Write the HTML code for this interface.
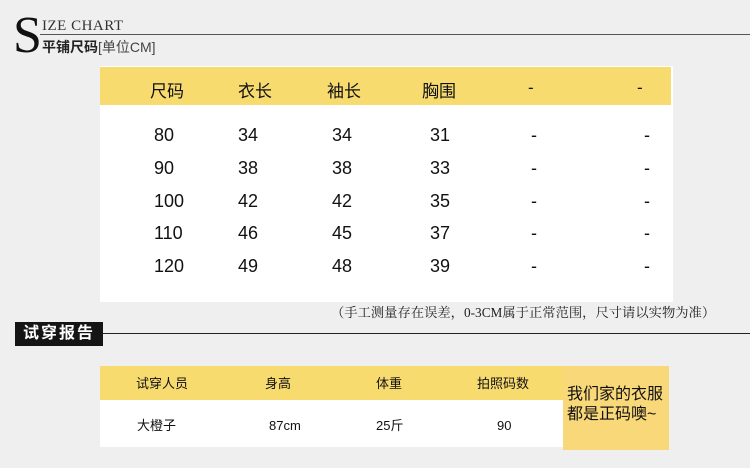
<!DOCTYPE html>
<html><head><meta charset="utf-8"><style>
*{margin:0;padding:0;box-sizing:border-box}
body{width:750px;height:468px;background:#efefef;position:relative;overflow:hidden;font-family:"Liberation Sans","Noto Sans CJK SC",sans-serif;color:#111}
.a{position:absolute;white-space:nowrap}
.h{font-size:17px}
.n{font-size:18px}
.s{font-size:13px;line-height:16px}
.n span{display:block;margin-top:8.75px}
</style></head><body>
<div class="a" style="left:13px;top:13px;font-family:'Liberation Serif',serif;font-size:52px;line-height:46px;color:#111">S</div>
<div class="a" style="left:42px;top:18px;font-family:'Liberation Serif',serif;font-size:15px;color:#333;letter-spacing:0.5px">IZE CHART</div>
<div class="a" style="left:40px;top:34px;width:710px;height:1px;background:#555"></div>
<div class="a" style="left:42px;top:37px;font-size:14px;color:#222"><b>平铺尺码</b><span style="color:#444">[单位CM]</span></div>

<div class="a" style="left:100px;top:66px;width:573px;height:236px;background:#fff"></div>
<div class="a" style="left:100px;top:67px;width:571px;height:38px;background:#f8db6f"></div>
<div class="a h" style="left:150px;top:77px">尺码</div>
<div class="a h" style="left:238px;top:77px">衣长</div>
<div class="a h" style="left:327px;top:77px">袖长</div>
<div class="a h" style="left:422px;top:77px">胸围</div>
<div class="a h" style="left:528px;top:78px">-</div>
<div class="a h" style="left:637px;top:78px">-</div>

<div class="a n" style="left:154px;top:123px;line-height:24px">80<span>90</span><span>100</span><span>110</span><span>120</span></div>
<div class="a n" style="left:238px;top:123px;line-height:24px">34<span>38</span><span>42</span><span>46</span><span>49</span></div>
<div class="a n" style="left:332px;top:123px;line-height:24px">34<span>38</span><span>42</span><span>45</span><span>48</span></div>
<div class="a n" style="left:430px;top:123px;line-height:24px">31<span>33</span><span>35</span><span>37</span><span>39</span></div>
<div class="a n" style="left:531px;top:123px;line-height:24px">-<span>-</span><span>-</span><span>-</span><span>-</span></div>
<div class="a n" style="left:644px;top:123px;line-height:24px">-<span>-</span><span>-</span><span>-</span><span>-</span></div>

<div class="a" style="left:331px;top:302px;font-family:'Liberation Serif','Noto Serif CJK SC',serif;font-size:13.3px;color:#222">（手工测量存在误差，0-3CM属于正常范围，尺寸请以实物为准）</div>

<div class="a" style="left:15px;top:322px;width:88px;height:24px;background:#151515;color:#fff;font-size:16px;font-weight:bold;line-height:24px;text-align:center;letter-spacing:2px">试穿报告</div>
<div class="a" style="left:103px;top:333px;width:647px;height:1px;background:#222"></div>

<div class="a" style="left:100px;top:366px;width:463px;height:81px;background:#fff"></div>
<div class="a" style="left:100px;top:366px;width:463px;height:34px;background:#f8db6f"></div>
<div class="a" style="left:563px;top:366px;width:106px;height:84px;background:#f8d878"></div>
<div class="a s" style="left:136px;top:376px">试穿人员</div>
<div class="a s" style="left:265px;top:376px">身高</div>
<div class="a s" style="left:376px;top:376px">体重</div>
<div class="a s" style="left:477px;top:376px">拍照码数</div>
<div class="a s" style="left:137px;top:418px">大橙子</div>
<div class="a s" style="left:269px;top:418px">87cm</div>
<div class="a s" style="left:376px;top:418px">25斤</div>
<div class="a s" style="left:497px;top:418px">90</div>
<div class="a" style="left:567px;top:385px;font-size:16px;line-height:20px">我们家的衣服<br>都是正码噢~</div>
</body></html>
